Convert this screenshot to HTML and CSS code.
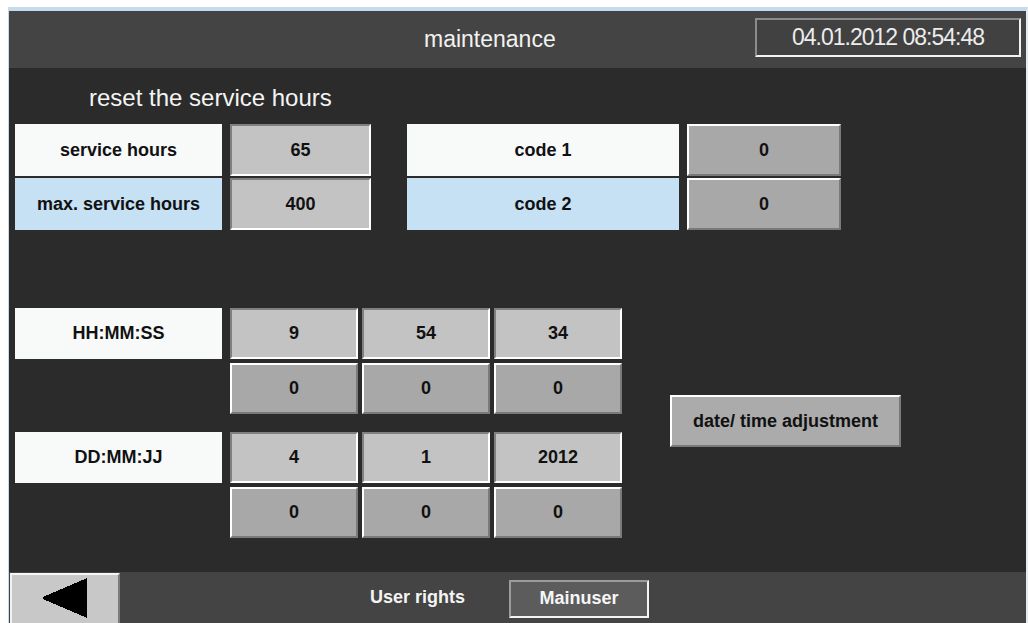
FILE: index.html
```html
<!DOCTYPE html>
<html lang="en">
<head>
<meta charset="utf-8">
<title>maintenance</title>
<link rel="stylesheet" href="styles.css">
</head>
<body>
<div class="screen">
  <header class="topbar">
    <h1 class="title">maintenance</h1>
    <div class="clock">04.01.2012 08:54:48</div>
  </header>

  <main class="content">
    <h2 class="section-title">reset the service hours</h2>

    <div class="service-grid">
      <div class="label">service hours</div>
      <div class="field">65</div>
      <div class="label pair-start">code 1</div>
      <div class="key">0</div>
      <div class="label alt">max. service hours</div>
      <div class="field">400</div>
      <div class="label alt pair-start">code 2</div>
      <div class="key">0</div>
    </div>

    <div class="clock-set">
      <div class="clock-groups">
        <div class="time-group">
          <div class="label">HH:MM:SS</div>
          <div class="field">9</div>
          <div class="field">54</div>
          <div class="field">34</div>
          <div class="blank"></div>
          <div class="key">0</div>
          <div class="key">0</div>
          <div class="key">0</div>
        </div>
        <div class="time-group">
          <div class="label">DD:MM:JJ</div>
          <div class="field">4</div>
          <div class="field">1</div>
          <div class="field">2012</div>
          <div class="blank"></div>
          <div class="key">0</div>
          <div class="key">0</div>
          <div class="key">0</div>
        </div>
      </div>
      <button class="key adjust" type="button">date/ time adjustment</button>
    </div>
  </main>

  <footer class="bottombar">
    <button class="back" type="button" aria-label="back">
      <svg width="44" height="40" viewBox="0 0 44 40" shape-rendering="crispEdges">
        <polygon points="0,19 44,0 44,40 0,21" fill="#000"/>
      </svg>
    </button>
    <span class="rights">User rights</span>
    <div class="user">Mainuser</div>
  </footer>
</div>
</body>
</html>
```

FILE: styles.css
```css
* {
  box-sizing: border-box;
}

html,
body {
  margin: 0;
  padding: 0;
  background: #ffffff;
  overflow: hidden;
}

body {
  font-family: "Liberation Sans", Arial, sans-serif;
}

/* panel frame */
.screen {
  margin: 7px 0 0 8px;
  width: 1020px;
  height: 616px;
  border-top: 4px solid #c6daee;
  border-left: 1px solid #c6daee;
  border-right: 2px solid #e4eaf0;
  display: flex;
  flex-direction: column;
  overflow: hidden;
}

/* title bar */
.topbar {
  height: 57px;
  flex: none;
  background: #444444;
  display: flex;
  align-items: center;
}

.title {
  margin: 0 0 0 415px;
  font-size: 23px;
  font-weight: normal;
  color: #f2f2f2;
  line-height: 1;
}

.clock {
  margin: 0 5px 4px auto;
  width: 266px;
  height: 39px;
  border: 2px solid;
  border-color: #8c8c8c #f2f2f2 #f2f2f2 #8c8c8c;
  background: #414141;
  color: #ececec;
  font-size: 23px;
  letter-spacing: -1px;
  display: flex;
  align-items: center;
  justify-content: center;
}

/* work area */
.content {
  height: 504px;
  flex: none;
  background: #2a2b2a;
  padding: 16px 0 0 6px;
}

.section-title {
  margin: 0 0 0 74px;
  font-size: 24px;
  line-height: 28px;
  font-weight: normal;
  color: #f4f4f4;
}

.label,
.field,
.key {
  display: flex;
  align-items: center;
  justify-content: center;
  font-size: 18px;
  font-weight: bold;
  color: #111111;
}

.label {
  background: #f8fafa;
}

.label.alt {
  background: #c6e0f4;
}

/* sunken output field */
.field {
  background: #c3c3c3;
  border: 2px solid;
  border-color: #808080 #ffffff #ffffff #808080;
}

/* raised input key */
.key {
  background: #a8a8a8;
  border: 2px solid;
  border-color: #ffffff #7a7a7a #7a7a7a #ffffff;
}

.service-grid {
  margin-top: 12px;
  display: grid;
  grid-template-columns: 207px 141px 300px 154px;
  grid-auto-rows: 52px;
  column-gap: 8px;
  row-gap: 2px;
}

.pair-start {
  margin-left: 28px;
}

.clock-set {
  margin-top: 78px;
  display: flex;
  align-items: center;
}

.clock-groups {
  display: flex;
  flex-direction: column;
  gap: 18px;
}

.time-group {
  display: grid;
  grid-template-columns: 211px repeat(3, 128px);
  grid-auto-rows: 51px;
  column-gap: 4px;
  row-gap: 4px;
}

.time-group .label {
  width: 207px;
}

.adjust {
  margin: 0 0 4px 48px;
  width: 231px;
  height: 52px;
  background: #ababab;
  font-family: inherit;
  padding: 0;
}

/* status bar */
.bottombar {
  height: 51px;
  flex: none;
  background: #444444;
  display: flex;
  align-items: center;
}

.back {
  align-self: flex-end;
  margin-left: 1px;
  width: 110px;
  height: 50px;
  padding: 0 0 2px;
  background: #c8c8c8;
  border: 0;
  border-top: 2px solid #f6f6f6;
  border-left: 2px solid #f0f0f0;
  border-right: 2px solid #7c7c7c;
  display: flex;
  align-items: center;
  justify-content: center;
}

.back svg {
  display: block;
}

.rights {
  margin-left: 250px;
  font-size: 18px;
  font-weight: bold;
  color: #f4f4f4;
}

.user {
  margin: 2px 0 0 44px;
  width: 140px;
  height: 38px;
  border: 2px solid;
  border-color: #9c9c9c #f4f4f4 #f4f4f4 #9c9c9c;
  background: #5c5c5c;
  color: #f6f6f6;
  font-size: 18px;
  font-weight: bold;
  display: flex;
  align-items: center;
  justify-content: center;
}
```
